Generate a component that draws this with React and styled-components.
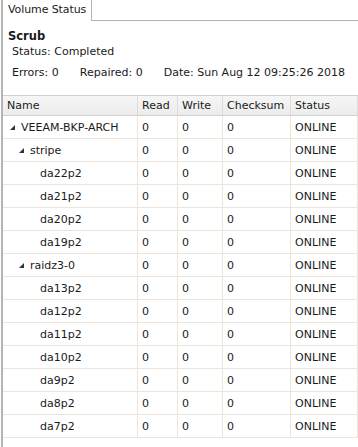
import React from "react";
import styled, { createGlobalStyle } from "styled-components";

const Global = createGlobalStyle`
  html, body { margin: 0; padding: 0; background: #fff; }
  body { font-family: "DejaVu Sans", Verdana, sans-serif; font-size: 11px; color: #1a1a1a; }
`;

const Page = styled.div`
  width: 358px;
  height: 447px;
  overflow: hidden;
  margin-left: 1px;
  border-left: 2px solid #b4b4b4;
  box-sizing: border-box;
`;

const TabStrip = styled.div`
  display: flex;
  height: 21px;
`;

const Tab = styled.div`
  width: 89px;
  height: 21px;
  box-sizing: border-box;
  border-right: 1px solid #b4b4b4;
  padding: 3px 0 0 5px;
  font-size: 11px;
  letter-spacing: -0.1px;
  white-space: nowrap;
  overflow: hidden;
`;

const TabFill = styled.div`
  flex: 1;
  border-bottom: 1px solid #b4b4b4;
`;

const Summary = styled.div`
  padding: 8px 0 0 5px;
  height: 74px;
  box-sizing: border-box;
`;

const Title = styled.div`
  font-weight: bold;
  font-size: 11.5px;
  line-height: 14px;
`;

const Line = styled.div`
  display: flex;
  gap: ${(p) => p.$gap || 0}px;
  padding-left: 4px;
  margin-top: ${(p) => p.$top}px;
  line-height: 14px;
  white-space: nowrap;
`;

const Table = styled.div`
  display: grid;
  grid-template-columns: 135px 40px 45px 68px 67px;
  width: 355px;
`;

const Head = styled.div`
  height: 21px;
  box-sizing: border-box;
  background: linear-gradient(#f6f6f6, #ececec);
  border-top: 1px solid #cfcfcf;
  border-bottom: 1px solid #cfcfcf;
  border-right: 1px solid #dcdcdc;
  padding: 3px 0 0 4px;
  white-space: nowrap;
`;

const Cell = styled.div`
  height: 23px;
  box-sizing: border-box;
  border-bottom: 1px solid #ede5dc;
  border-right: 1px solid #ede5dc;
  display: flex;
  align-items: center;
  padding-left: ${(p) => p.$pad ?? 4}px;
  white-space: nowrap;
`;

const Toggle = styled.svg`
  width: 5px;
  height: 5px;
  margin-right: 6px;
  flex: none;
`;

const Arrow = () => (
  <Toggle viewBox="0 0 5 5">
    <polygon points="5,0 5,5 0,5" fill="#333" />
  </Toggle>
);

const rows = [
  { name: "VEEAM-BKP-ARCH", level: 0, tog: true },
  { name: "stripe", level: 1, tog: true },
  { name: "da22p2", level: 2 },
  { name: "da21p2", level: 2 },
  { name: "da20p2", level: 2 },
  { name: "da19p2", level: 2 },
  { name: "raidz3-0", level: 1, tog: true },
  { name: "da13p2", level: 2 },
  { name: "da12p2", level: 2 },
  { name: "da11p2", level: 2 },
  { name: "da10p2", level: 2 },
  { name: "da9p2", level: 2 },
  { name: "da8p2", level: 2 },
  { name: "da7p2", level: 2 },
];

function namePad(r) {
  if (r.tog) return 7 + r.level * 9;
  return 37;
}

export default function App() {
  return (
    <>
      <Global />
      <Page>
        <TabStrip>
          <Tab>Volume Status</Tab>
          <TabFill />
        </TabStrip>
        <Summary>
          <Title>Scrub</Title>
          <Line $top={2}>Status: Completed</Line>
          <Line $top={7} $gap={21}>
            <span>Errors: 0</span>
            <span>Repaired: 0</span>
            <span>Date: Sun Aug 12 09:25:26 2018</span>
          </Line>
        </Summary>
        <Table>
          <Head>Name</Head>
          <Head>Read</Head>
          <Head>Write</Head>
          <Head>Checksum</Head>
          <Head>Status</Head>
          {rows.map((r) => (
            <React.Fragment key={r.name}>
              <Cell $pad={namePad(r)}>
                {r.tog && <Arrow />}
                {r.name}
              </Cell>
              <Cell>0</Cell>
              <Cell>0</Cell>
              <Cell>0</Cell>
              <Cell>ONLINE</Cell>
            </React.Fragment>
          ))}
        </Table>
      </Page>
    </>
  );
}
